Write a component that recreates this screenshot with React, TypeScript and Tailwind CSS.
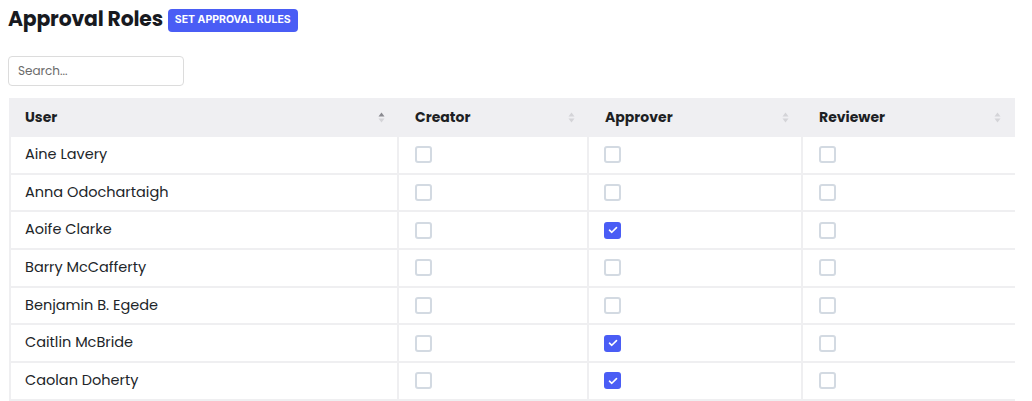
const users = [
  { name: "Aine Lavery", creator: false, approver: false, reviewer: false },
  { name: "Anna Odochartaigh", creator: false, approver: false, reviewer: false },
  { name: "Aoife Clarke", creator: false, approver: true, reviewer: false },
  { name: "Barry McCafferty", creator: false, approver: false, reviewer: false },
  { name: "Benjamin B. Egede", creator: false, approver: false, reviewer: false },
  { name: "Caitlin McBride", creator: false, approver: true, reviewer: false },
  { name: "Caolan Doherty", creator: false, approver: true, reviewer: false },
];

function SortIcon({ active }: { active?: boolean }) {
  return (
    <svg width="7" height="11" viewBox="0 0 7 11" className="shrink-0">
      <path d="M3.5 0.5 L6.5 4.5 L0.5 4.5 Z" fill={active ? "#8a8a90" : "#d4d4d8"} />
      <path d="M3.5 10.5 L6.5 6.5 L0.5 6.5 Z" fill="#d4d4d8" />
    </svg>
  );
}

function Checkbox({ checked }: { checked: boolean }) {
  if (checked) {
    return (
      <span className="flex h-[17px] w-[17px] items-center justify-center rounded-[3px] bg-[#4a5df5]">
        <svg width="10" height="8" viewBox="0 0 10 8">
          <path d="M1.5 4.2 L3.8 6.3 L8.5 1.6" fill="none" stroke="#fff" strokeWidth="1.6" strokeLinecap="round" strokeLinejoin="round" />
        </svg>
      </span>
    );
  }
  return <span className="block h-[17px] w-[17px] rounded-[3px] border-2 border-[#d3dae2] bg-white" />;
}

const cols = [
  { label: "User", w: "w-[390px]", active: true },
  { label: "Creator", w: "w-[190px]" },
  { label: "Approver", w: "w-[214px]" },
  { label: "Reviewer", w: "w-[212px]" },
];

export default function App() {
  return (
    <div className="min-h-screen bg-white font-['Poppins','Inter',sans-serif] text-[#212529]">
      <div className="flex items-center gap-[5px] pl-[8px] pt-[5px]">
        <h1 className="text-[20.4px] font-bold leading-[28px] tracking-[-0.2px] text-[#181a1f]">Approval Roles</h1>
        <button className="mt-[2px] flex h-[23px] items-center rounded-[4px] bg-[#4a5df5] px-[7px] font-['Inter',sans-serif] text-[10.5px] font-bold text-white">
          SET APPROVAL RULES
        </button>
      </div>

      <div className="pl-[8px] pt-[23px]">
        <input
          placeholder="Search..."
          className="h-[30px] w-[176px] rounded-[4px] border border-[#dcdcdc] px-[9px] text-[12px] text-[#555] placeholder:text-[#6b6b6b] outline-none"
        />
      </div>

      <div className="ml-[9px] mt-[12px] w-[1006px]">
        <div className="flex h-[39px] bg-[#efeff2]">
          {cols.map((c) => (
            <div key={c.label} className={`${c.w} flex items-center justify-between pl-[16px] pr-[14px]`}>
              <span className="text-[14px] font-bold text-[#1d1f24]">{c.label}</span>
              <SortIcon active={c.active} />
            </div>
          ))}
        </div>
        {users.map((u) => (
          <div key={u.name} className="flex h-[37.7px] border-b-2 border-l-2 border-[#efeff1]">
            <div className="flex w-[388px] items-center border-r-2 border-[#efeff1] pl-[14px] text-[14.5px] text-[#212529]">
              {u.name}
            </div>
            <div className="flex w-[190px] items-center border-r-2 border-[#efeff1] pl-[16px]">
              <Checkbox checked={u.creator} />
            </div>
            <div className="flex w-[214px] items-center border-r-2 border-[#efeff1] pl-[15px]">
              <Checkbox checked={u.approver} />
            </div>
            <div className="flex w-[212px] items-center pl-[16px]">
              <Checkbox checked={u.reviewer} />
            </div>
          </div>
        ))}
      </div>
    </div>
  );
}
